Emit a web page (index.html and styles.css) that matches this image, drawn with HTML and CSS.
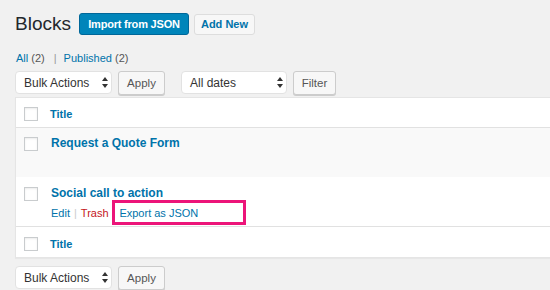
FILE: index.html
```html
<!DOCTYPE html>
<html lang="en">
<head>
  <meta charset="UTF-8">
  <title>Blocks</title>
  <link rel="stylesheet" href="styles.css">
</head>
<body>
  <div class="wrap">
    <div class="page-head">
      <h1>Blocks</h1>
      <a class="btn btn-primary">Import from JSON</a>
      <a class="btn btn-add">Add New</a>
    </div>

    <ul class="subsubsub">
      <li><a>All</a> <span class="count">(2)</span></li>
      <li class="sep">|</li>
      <li><a>Published</a> <span class="count">(2)</span></li>
    </ul>

    <div class="tablenav">
      <div class="select bulk">
        <span>Bulk Actions</span>
        <svg width="6" height="11" viewBox="0 0 6 11"><path d="M3 0L6 4H0Z M3 11L0 7H6Z" fill="#333"/></svg>
      </div>
      <button class="button apply">Apply</button>
      <div class="select dates">
        <span>All dates</span>
        <svg width="6" height="11" viewBox="0 0 6 11"><path d="M3 0L6 4H0Z M3 11L0 7H6Z" fill="#333"/></svg>
      </div>
      <button class="button filter">Filter</button>
    </div>

    <div class="list">
      <div class="row row-head">
        <span class="check"></span>
        <a class="col-title">Title</a>
      </div>
      <div class="row row-alt">
        <span class="check"></span>
        <div class="cell">
          <a class="row-title">Request a Quote Form</a>
        </div>
      </div>
      <div class="row row-item">
        <span class="check"></span>
        <div class="cell">
          <a class="row-title">Social call to action</a>
          <div class="row-actions">
            <a>Edit</a><span class="sep">|</span><a class="trash">Trash</a><span class="sep">|</span><a>Export as JSON</a>
            <span class="highlight"></span>
          </div>
        </div>
      </div>
      <div class="row row-foot">
        <span class="check"></span>
        <a class="col-title">Title</a>
      </div>
    </div>

    <div class="tablenav bottom">
      <div class="select bulk">
        <span>Bulk Actions</span>
        <svg width="6" height="11" viewBox="0 0 6 11"><path d="M3 0L6 4H0Z M3 11L0 7H6Z" fill="#333"/></svg>
      </div>
      <button class="button apply">Apply</button>
    </div>
  </div>
</body>
</html>
```

FILE: styles.css
```css
body {
  margin: 0;
  background: #f1f1f1;
  font-family: "Liberation Sans", Arial, sans-serif;
  color: #444;
  overflow: hidden;
}

a {
  color: #0073aa;
  text-decoration: none;
}

.wrap {
  padding: 13px 0 0 15px;
}

.page-head {
  display: flex;
  align-items: center;
  height: 22px;
}

h1 {
  margin: 0 8px 0 0;
  font-size: 19px;
  font-weight: 400;
  line-height: 22px;
  color: #23282d;
}

.btn {
  display: flex;
  align-items: center;
  justify-content: center;
  box-sizing: border-box;
  height: 22px;
  font-size: 11px;
  font-weight: 700;
  border-radius: 3px;
}

.btn-primary {
  width: 110px;
  background: #0085ba;
  border: 1px solid #006799;
  color: #fff;
  letter-spacing: -0.2px;
}

.btn-add {
  width: 61px;
  height: 21px;
  margin-left: 5px;
  background: #f7f7f7;
  border: 1px solid #ddd;
}

.subsubsub {
  display: flex;
  list-style: none;
  margin: 15px 0 0 1px;
  padding: 0;
  font-size: 11px;
  line-height: 16px;
  color: #555;
}

.subsubsub .sep {
  margin: 0 7px 0 9px;
  color: #999;
}

.tablenav {
  display: flex;
  margin-top: 5px;
  height: 24px;
}

.select {
  display: flex;
  align-items: center;
  justify-content: space-between;
  box-sizing: border-box;
  height: 23px;
  padding: 0 3px 0 8px;
  background: #fff;
  border: 1px solid #e2e2e2;
  border-radius: 4px;
  font-size: 12px;
  color: #333;
}

.select.bulk {
  width: 97px;
}

.select.dates {
  width: 106px;
  margin-left: 16px;
}

.button {
  box-sizing: border-box;
  height: 24px;
  margin-left: 6px;
  padding: 0;
  background: #f7f7f7;
  border: 1px solid #ccc;
  border-radius: 3px;
  box-shadow: 0 1px 0 #ccc;
  font-family: inherit;
  font-size: 11.5px;
  color: #555;
}

.button.apply {
  width: 47px;
}

.button.filter {
  width: 43px;
}

.list {
  margin: 2px -20px 0 0;
  background: #fff;
  border: 1px solid #e5e5e5;
  box-shadow: 0 1px 1px rgba(0, 0, 0, 0.04);
}

.row {
  display: flex;
  align-items: flex-start;
  padding-left: 8px;
}

.check {
  flex: none;
  width: 14px;
  height: 14px;
  box-sizing: border-box;
  background: #fff;
  border: 1px solid #c9ccce;
  box-shadow: inset 0 1px 2px rgba(0, 0, 0, 0.08);
  margin-right: 12px;
}

.row-head {
  box-sizing: border-box;
  height: 30px;
  padding-top: 9px;
  border-bottom: 1px solid #e1e1e1;
}

.col-title {
  font-size: 11px;
  font-weight: 700;
  line-height: 14px;
}

.row-alt,
.row-item {
  height: 49px;
  box-sizing: border-box;
  padding-top: 9px;
}

.row-alt {
  background: #f9f9f9;
}

.row-item {
  padding-top: 10px;
}

.cell {
  margin-top: -2px;
}

.row-title {
  display: block;
  font-size: 12px;
  font-weight: 700;
  line-height: 16px;
  margin-left: 1px;
}

.row-actions {
  position: relative;
  margin: 4px 0 0 1px;
  font-size: 11px;
  line-height: 16px;
}

.row-actions .sep {
  margin: 0 4px;
  color: #ccc;
}

.row-actions .trash {
  color: #c4161c;
}

.highlight {
  position: absolute;
  left: 61px;
  top: -5px;
  width: 134px;
  height: 25px;
  box-sizing: border-box;
  border: 3px solid #ec1479;
}

.row-foot {
  height: 31px;
  box-sizing: border-box;
  padding-top: 10px;
  border-top: 1px solid #e1e1e1;
}

.tablenav.bottom {
  margin-top: 8px;
}
```
